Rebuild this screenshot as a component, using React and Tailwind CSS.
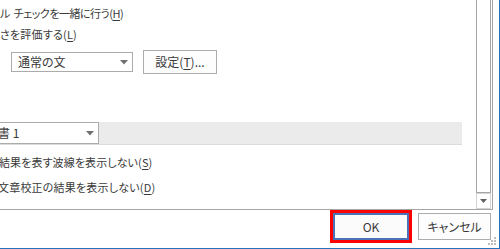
import React from "react";

const font = "font-['Noto_Sans_CJK_JP','Noto_Sans',sans-serif] [font-feature-settings:'palt']";

const Arrow = () => (
  <svg width="8" height="5" viewBox="0 0 8 5" className="shrink-0">
    <path d="M0 0 H8 L4 4.5 Z" fill="#707070" />
  </svg>
);

const Key = ({ k }) => (
  <>
    (<span className="underline underline-offset-2">{k}</span>)
  </>
);

const Grip = () => (
  <svg width="10" height="10" viewBox="0 0 10 10" className="absolute right-[2px] bottom-[2px]">
    {[[7, 1], [4, 4], [7, 4], [1, 7], [4, 7], [7, 7]].map(([x, y]) => (
      <rect key={x + "-" + y} x={x} y={y} width="2" height="2" fill="#bdbdbd" />
    ))}
  </svg>
);

export default function App() {
  return (
    <div className={`relative w-[500px] h-[249px] overflow-hidden bg-white border-r border-b border-[#2672bd] text-[12px] text-[#3a3a3a] ${font}`}>
      <div className="flex w-[493px] h-[210px] border-r border-b border-[#a5a5a5]">
        <div className="w-[476px] overflow-hidden pt-[3px] whitespace-nowrap">
          <div className="h-[21px] leading-[21px] text-[11px] tracking-[-0.5px]">
            ル&nbsp;&nbsp;チェックを一緒に行う<Key k="H" />
          </div>
          <div className="h-[21px] leading-[21px] text-[11px] tracking-[0.2px]">
            さを評価する<Key k="L" />
          </div>
          <div className="mt-[5px] flex items-center h-[24px]">
            <div className="ml-[11px] w-[122px] h-[20px] border border-[#ababab] flex items-center justify-between pl-[6px] pr-[4px]">
              <span className="leading-none">通常の文</span>
              <Arrow />
            </div>
            <button className="ml-[10px] w-[74px] h-[24px] border border-[#adadad] bg-[#fdfdfd] leading-none">
              設定<Key k="T" />...
            </button>
          </div>
          <div className="mt-[48px] w-[462px] h-[23px] bg-[#ebebeb] border-b border-[#dcdcdc] flex">
            <div className="ml-[-1px] w-[100px] h-[22px] bg-white border border-[#ababab] flex items-center justify-between pr-[4px]">
              <span className="ml-[-2px] leading-none">書 1</span>
              <Arrow />
            </div>
          </div>
          <div className="mt-[5px] h-[25px] leading-[25px] ml-[-1px] text-[11px] tracking-[0.1px]">
            結果を表す波線を表示しない<Key k="S" />
          </div>
          <div className="h-[25px] leading-[25px] ml-[-2px] text-[11px] tracking-[0.2px]">
            文章校正の結果を表示しない<Key k="D" />
          </div>
        </div>
        <div className="w-[15px] flex flex-col">
          <div className="h-[193px] border-x border-b border-[#a6a6a6]" />
          <div className="h-[16px] border border-[#d4d4d4] flex items-center justify-center">
            <svg width="7" height="4" viewBox="0 0 7 4">
              <path d="M0 0 H7 L3.5 4 Z" fill="#606060" />
            </svg>
          </div>
        </div>
      </div>
      <div className="flex justify-end items-start pt-[3px] pr-[8px] gap-[9px]">
        <button className="w-[76px] h-[27px] border-2 border-[#4a72b6] bg-[#fbfbfb] ring-[3px] ring-[#ff0000] leading-none">
          OK
        </button>
        <button className="w-[73px] h-[27px] border border-[#adadad] bg-[#fdfdfd] leading-none">
          キャンセル
        </button>
      </div>
      <Grip />
    </div>
  );
}
